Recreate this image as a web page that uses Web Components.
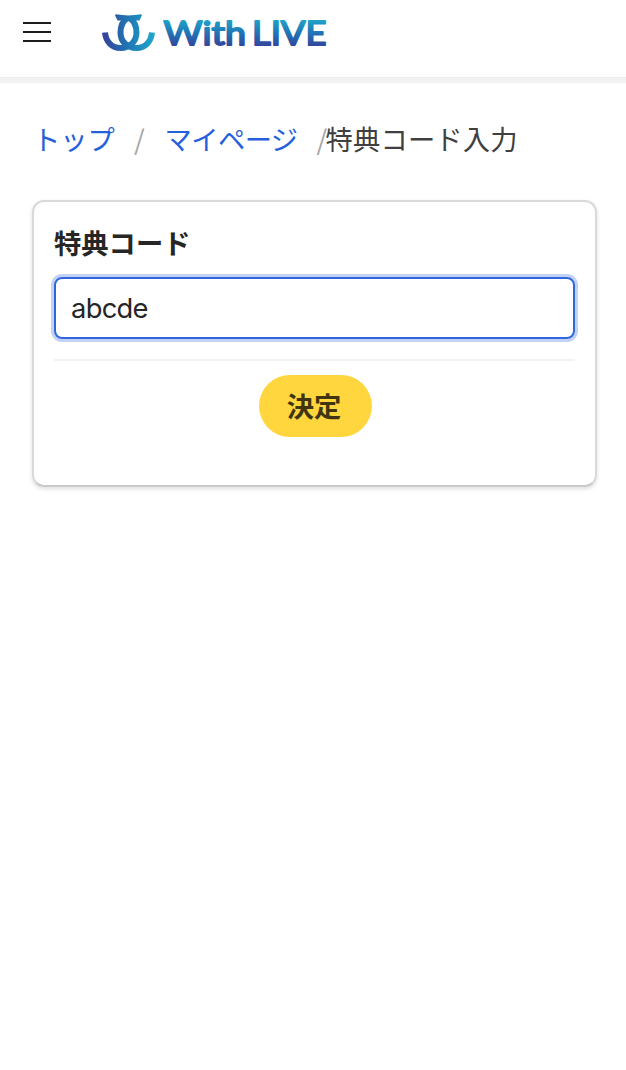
<!DOCTYPE html>
<html lang="ja">
<head>
<meta charset="UTF-8">
<title>特典コード入力</title>
<style>
    body {
        margin: 0;
        min-height: 100vh;
        background: #fff;
        color: #262626;
        font-family: Inter, "Noto Sans CJK JP", sans-serif;
        font-size: 27.3px;
    }

    main {
        padding: 35px 29px 0 32px;
    }
</style>
</head>
<body>
<site-header></site-header>
<main>
    <bread-crumbs>
        <crumb-link>トップ</crumb-link>
        <crumb-link>マイページ</crumb-link>
        <span slot="current">特典コード入力</span>
    </bread-crumbs>
    <form-card>
        <text-field label="特典コード" value="abcde"></text-field>
        <submit-button slot="actions">決定</submit-button>
    </form-card>
</main>
<script>
class BrandLogo extends HTMLElement {
    constructor() {
        super();
        this.attachShadow({ mode: 'open' });
    }

    connectedCallback() {
        this.shadowRoot.innerHTML = `
            <style>
                :host { display: block; width: 228px; height: 42px; }
                svg { display: block; }
                text {
                    font-family: Lato, sans-serif;
                    font-weight: 400;
                    font-size: 33.5px;
                    stroke: url(#word);
                    stroke-width: 1.9px;
                    stroke-linejoin: round;
                }
            </style>
            <svg width="228" height="42" viewBox="0 0 228 42">
                <defs>
                    <linearGradient id="mark" gradientUnits="userSpaceOnUse" x1="2" y1="0" x2="55" y2="0">
                        <stop offset="0" stop-color="#363f98"/>
                        <stop offset=".5" stop-color="#1f78b5"/>
                        <stop offset="1" stop-color="#22a8cb"/>
                    </linearGradient>
                    <linearGradient id="word" gradientUnits="userSpaceOnUse" x1="0" y1="9" x2="0" y2="36">
                        <stop offset="0" stop-color="#20a3c9"/>
                        <stop offset=".5" stop-color="#2172b5"/>
                        <stop offset="1" stop-color="#34429a"/>
                    </linearGradient>
                </defs>
                <g fill="none" stroke="url(#mark)" stroke-width="6">
                    <path d="M5 21.5C6 31 12 37 20.5 37C30.5 37 36.5 30 36.5 21.5C36.5 15.5 34 10 29.5 7"/>
                    <path d="M52 21.5C51 31 45 37 36.5 37C26.5 37 20.5 30 20.5 21.5C20.5 15.5 23 10 27.5 7"/>
                </g>
                <path fill="url(#mark)" d="M16 3.2Q22 3.8 28.5 4.6Q35 3.8 41 3.2L42 4.2L39.5 9.4H17.5L15 4.2Z"/>
                <g fill="url(#word)">
                    <text x="63.5" y="33.7" textLength="82.5" lengthAdjust="spacingAndGlyphs">With</text>
                    <text x="152" y="33.7" textLength="74.5" lengthAdjust="spacingAndGlyphs">LIVE</text>
                </g>
            </svg>
        `;
    }
}

class SiteHeader extends HTMLElement {
    constructor() {
        super();
        this.attachShadow({ mode: 'open' });
    }

    connectedCallback() {
        this.shadowRoot.innerHTML = `
            <style>
                :host {
                    display: flex;
                    align-items: flex-start;
                    gap: 49px;
                    box-sizing: border-box;
                    height: 83px;
                    padding: 11px 0 0 23px;
                    border-bottom: 5px solid #f2f2f2;
                    box-shadow: inset 0 -1px #ebebeb;
                }

                .menu {
                    display: flex;
                    flex-direction: column;
                    gap: 7px;
                    width: 28px;
                    padding: 11px 0 0;
                    border: 0;
                    background: none;
                }

                .menu i {
                    height: 2px;
                    background: #1c1c1c;
                }
            </style>
            <button class="menu" aria-label="menu"><i></i><i></i><i></i></button>
            <brand-logo></brand-logo>
        `;
    }
}

class CrumbLink extends HTMLElement {
    constructor() {
        super();
        this.attachShadow({ mode: 'open' });
    }

    connectedCallback() {
        this.shadowRoot.innerHTML = `
            <style>
                :host { display: flex; }
                a { color: #255fdc; }
                span { color: #a6a6a6; }
                :host(:first-child) { margin-left: 1px; }
                :host(:first-child) span { margin: 0 20px 0 19px; }
                :host(:not(:first-child)) a { letter-spacing: -0.6px; }
                :host(:not(:first-child)) span { width: 9px; margin-left: 19px; }
            </style>
            <a><slot></slot></a><span>/</span>
        `;
    }
}

class BreadCrumbs extends HTMLElement {
    constructor() {
        super();
        this.attachShadow({ mode: 'open' });
    }

    connectedCallback() {
        this.shadowRoot.innerHTML = `
            <style>
                :host {
                    display: flex;
                    height: 40px;
                    line-height: 40px;
                    white-space: nowrap;
                    font-weight: 400;
                    font-family: "Noto Sans CJK JP", sans-serif;
                }
                ::slotted([slot="current"]) { color: #404040; letter-spacing: 0.15px; }
            </style>
            <slot></slot><slot name="current"></slot>
        `;
    }
}

class FormCard extends HTMLElement {
    constructor() {
        super();
        this.attachShadow({ mode: 'open' });
    }

    connectedCallback() {
        this.shadowRoot.innerHTML = `
            <style>
                :host {
                    display: block;
                    box-sizing: border-box;
                    height: 287px;
                    margin-top: 42px;
                    padding: 20px 20px 0;
                    border: 2px solid #d9d9d9;
                    border-bottom-color: #c9c9c9;
                    border-radius: 12px;
                    box-shadow: 0 2px 4px rgba(0, 0, 0, 0.13);
                }

                .actions {
                    display: flex;
                    justify-content: center;
                    margin-top: 20px;
                    padding: 14px 0 0 1px;
                    border-top: 2px solid #f2f2f2;
                }
            </style>
            <slot></slot>
            <div class="actions"><slot name="actions"></slot></div>
        `;
    }
}

class TextField extends HTMLElement {
    constructor() {
        super();
        this.attachShadow({ mode: 'open' });
    }

    connectedCallback() {
        this.shadowRoot.innerHTML = `
            <style>
                :host { display: block; }

                label {
                    display: block;
                    height: 40px;
                    line-height: 40px;
                    margin-bottom: 15px;
                    font-family: "Noto Sans CJK JP", sans-serif;
                    font-weight: 700;
                }

                .input {
                    box-sizing: border-box;
                    height: 62px;
                    padding: 0 15px;
                    border: 2px solid #2f66dc;
                    border-radius: 8px;
                    box-shadow: 0 0 0 3px #c2d2f5;
                    line-height: 59px;
                    letter-spacing: -0.7px;
                    outline: none;
                }
            </style>
            <label>${this.getAttribute('label')}</label>
            <div class="input" role="textbox">${this.getAttribute('value')}</div>
        `;
    }
}

class SubmitButton extends HTMLElement {
    constructor() {
        super();
        this.attachShadow({ mode: 'open' });
    }

    connectedCallback() {
        this.shadowRoot.innerHTML = `
            <style>
                :host { display: block; }

                button {
                    display: block;
                    width: 113px;
                    height: 62px;
                    padding: 0 2px 2px 0;
                    border: 0;
                    border-radius: 31px;
                    background: #ffd63d;
                    color: #40350f;
                    font: 700 27.3px/60px "Noto Sans CJK JP", sans-serif;
                }
            </style>
            <button><slot></slot></button>
        `;
    }
}

customElements.define('brand-logo', BrandLogo);
customElements.define('site-header', SiteHeader);
customElements.define('crumb-link', CrumbLink);
customElements.define('bread-crumbs', BreadCrumbs);
customElements.define('form-card', FormCard);
customElements.define('text-field', TextField);
customElements.define('submit-button', SubmitButton);
</script>
</body>
</html>
